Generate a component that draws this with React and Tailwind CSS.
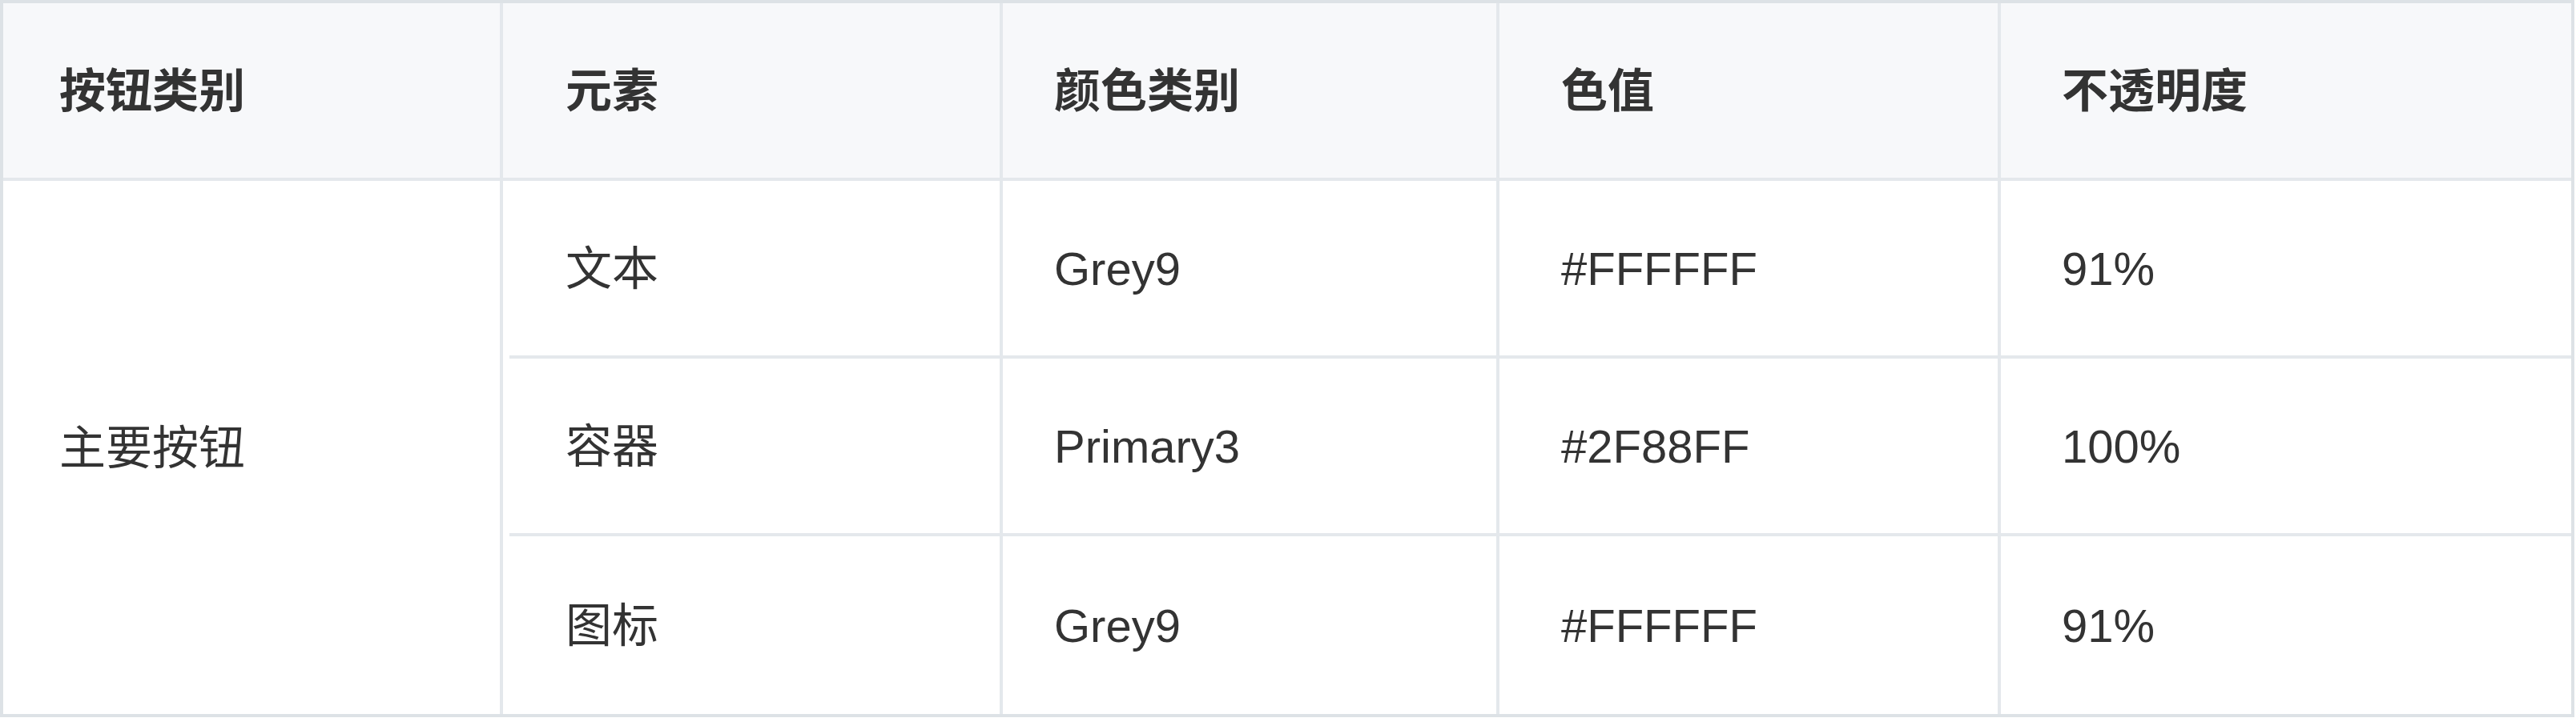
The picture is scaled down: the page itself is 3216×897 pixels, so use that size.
import React from 'react';

const font = { fontFamily: '"Liberation Sans", "Noto Sans CJK SC", sans-serif' };

const rows = [
    { element: '文本', type: 'Grey9', value: '#FFFFFF', opacity: '91%' },
    { element: '容器', type: 'Primary3', value: '#2F88FF', opacity: '100%' },
    { element: '图标', type: 'Grey9', value: '#FFFFFF', opacity: '91%' },
];

const BodyRow = ({ row, className }) => (
    <div className={`flex ${className}`}>
        <div className="w-[624px] shrink-0 border-r-4 border-[#e4e8ec] flex items-center pl-[78px]">{row.element}</div>
        <div className="w-[620px] shrink-0 border-r-4 border-[#e4e8ec] flex items-center pl-[64px]">{row.type}</div>
        <div className="w-[626px] shrink-0 border-r-4 border-[#e4e8ec] flex items-center pl-[77px]">{row.value}</div>
        <div className="flex-1 flex items-center pl-[76px]">{row.opacity}</div>
    </div>
);

const App = () => {
    return (
        <div className="w-[3216px] h-[897px] bg-white">
            <div
                className="w-[3214px] h-[896px] border-4 border-[#dde2e6] flex flex-col text-[58px] text-[#333333]"
                style={font}
            >
                {/* header */}
                <div className="flex h-[222px] shrink-0 bg-[#f7f8fa] border-b-4 border-[#e4e8ec] font-bold">
                    <div className="w-[624px] shrink-0 border-r-4 border-[#e4e8ec] flex items-center pl-[70px]">按钮类别</div>
                    <div className="w-[624px] shrink-0 border-r-4 border-[#e4e8ec] flex items-center pl-[78px]">元素</div>
                    <div className="w-[620px] shrink-0 border-r-4 border-[#e4e8ec] flex items-center pl-[64px]">颜色类别</div>
                    <div className="w-[626px] shrink-0 border-r-4 border-[#e4e8ec] flex items-center pl-[77px]">色值</div>
                    <div className="flex-1 flex items-center pl-[76px]">不透明度</div>
                </div>

                {/* body */}
                <div className="flex flex-1">
                    <div className="w-[624px] shrink-0 border-r-4 border-[#e4e8ec] flex items-center pl-[70px]">主要按钮</div>
                    <div className="flex-1 flex flex-col">
                        <BodyRow row={rows[0]} className="h-[218px]" />
                        <div className="h-[4px] ml-[8px] bg-[#e4e8ec]" />
                        <BodyRow row={rows[1]} className="h-[218px]" />
                        <div className="h-[4px] ml-[8px] bg-[#e4e8ec]" />
                        <BodyRow row={rows[2]} className="flex-1" />
                    </div>
                </div>
            </div>
        </div>
    );
};

export default App;
